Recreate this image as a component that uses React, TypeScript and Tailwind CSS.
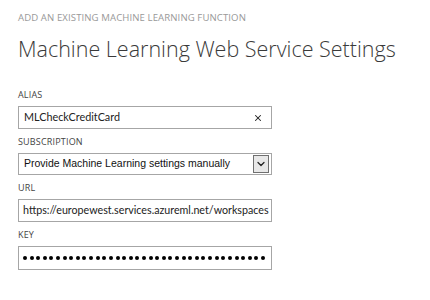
import { X, ChevronDown } from "lucide-react";

const font = { fontFamily: '"Open Sans", "Noto Sans", sans-serif' };
const inputFont = { fontFamily: 'Lato, "Open Sans", sans-serif' };

function Label({ children }: { children: React.ReactNode }) {
    return (
        <div className="text-[9px] leading-[12px] text-[#444] tracking-[0.02em] mb-[5px]">{children}</div>
    );
}

export default function App() {
    const dots = Array.from({ length: 37 });
    return (
        <div className="w-[430px] h-[300px] bg-white pl-[18px] pt-[12px]" style={font}>
            <div className="text-[9.6px] leading-[12px] text-[#999] tracking-[0.01em]">
                ADD AN EXISTING MACHINE LEARNING FUNCTION
            </div>
            <div className="mt-[12px] text-[21.5px] leading-[26px] font-light text-[#3a3a3a]">
                Machine Learning Web Service Settings
            </div>

            <div className="mt-[27px] w-[254px] flex flex-col">
                <Label>ALIAS</Label>
                <div className="h-[23px] border border-[#a6a6a6] flex items-center pl-[5px] pr-[8px]" style={inputFont}>
                    <span className="flex-1 text-[10.8px] text-[#222]">MLCheckCreditCard</span>
                    <X className="w-[10px] h-[10px] text-[#222]" strokeWidth={2.5} />
                </div>

                <div className="mt-[7px]">
                    <Label>SUBSCRIPTION</Label>
                </div>
                <div className="h-[22px] border border-[#a6a6a6] flex items-center pl-[5px] pr-[2px]">
                    <span className="flex-1 text-[10.5px] text-[#111]" style={{ fontFamily: '"Liberation Sans", Arial, sans-serif' }}>
                        Provide Machine Learning settings manually
                    </span>
                    <div className="w-[16px] h-[18px] border border-[#707070] bg-[#e8e8e8] flex items-center justify-center">
                        <ChevronDown className="w-[12px] h-[12px] text-[#222]" strokeWidth={2.5} />
                    </div>
                </div>

                <div className="mt-[7px]">
                    <Label>URL</Label>
                </div>
                <div className="h-[23px] border border-[#a6a6a6] flex items-center pl-[4px] overflow-hidden" style={inputFont}>
                    <span className="whitespace-nowrap text-[10.7px] text-[#222]">
                        https://europewest.services.azureml.net/workspaces
                    </span>
                </div>

                <div className="mt-[7px]">
                    <Label>KEY</Label>
                </div>
                <div className="h-[24px] border border-[#a6a6a6] flex items-center pl-[4px] pr-[6px]">
                    <div className="flex-1 flex justify-between">
                        {dots.map((_, i) => (
                            <span key={i} className="w-[4px] h-[4px] rounded-full bg-black" />
                        ))}
                    </div>
                </div>
            </div>
        </div>
    );
}
